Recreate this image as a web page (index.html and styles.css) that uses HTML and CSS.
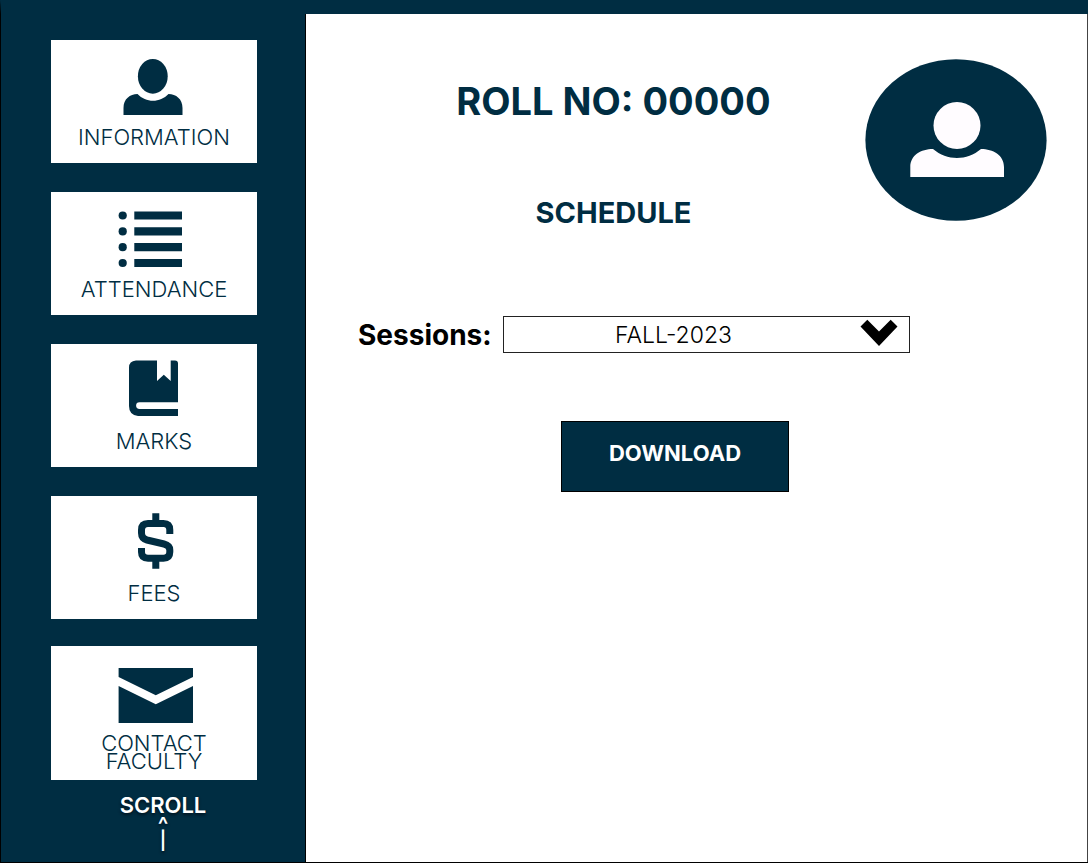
FILE: index.html
```html
<!DOCTYPE html>
<html lang="en">
<head>
<meta charset="utf-8">
<meta name="viewport" content="width=device-width, initial-scale=1">
<title>Schedule</title>
<link rel="stylesheet" href="styles.css">
</head>
<body>
<div class="app">
  <aside class="sidebar">
    <nav class="menu">
      <a class="card" href="#information">
        <svg class="card-icon" viewBox="0 0 80 62" aria-hidden="true"><ellipse cx="38.8" cy="20.3" rx="14.9" ry="17.4"/><path d="M9.5 59V52C9.5 43 16 38 23.5 38C32 47 46 47 54.5 38C62 38 68.5 43 68.5 52V59Z"/></svg>
        <span class="card-label">INFORMATION</span>
      </a>
      <a class="card" href="#attendance">
        <svg class="card-icon" viewBox="0 0 80 62" aria-hidden="true"><circle cx="8.7" cy="7.5" r="4.1"/><circle cx="8.7" cy="23.4" r="4.1"/><circle cx="8.7" cy="39.2" r="4.1"/><circle cx="8.7" cy="55" r="4.1"/><path d="M20.3 3.4H68V11.6H20.3ZM20.3 19.3H68V27.5H20.3ZM20.3 35.1H68V43.3H20.3ZM20.3 50.9H68V59.1H20.3Z"/></svg>
        <span class="card-label">ATTENDANCE</span>
      </a>
      <a class="card" href="#marks">
        <svg class="card-icon" viewBox="0 0 80 62" aria-hidden="true"><path d="M22 0.5H43V21L49.8 14.7L56.7 21V0.5H61Q64 0.5 64 3.5V42.2H25.5A3.4 3.4 0 0 0 25.5 49H64V56H24Q15 55 15 46V7.5Q15 1 22 0.5Z"/></svg>
        <span class="card-label">MARKS</span>
      </a>
      <a class="card" href="#fees">
        <svg class="card-icon" viewBox="0 0 80 62" aria-hidden="true"><path d="M38.3 1.3H45.3V10H38.3ZM38.3 47H45.3V56.8H38.3Z"/><path class="stroke" d="M55.8 21.9V18Q55.8 11.5 49.5 11.5H34Q27.5 11.5 27.5 18V21Q27.5 26.5 33 28L50 32Q55.8 33.5 55.8 38V40Q55.8 46.2 49.5 46.2H34Q27.5 46.2 27.5 40V36"/></svg>
        <span class="card-label">FEES</span>
      </a>
      <a class="card" href="#contact">
        <svg class="card-icon" viewBox="0 0 80 62" aria-hidden="true"><path d="M4.6 6H79V15L41.8 33.3L4.6 15ZM4.6 24L41.8 42.3L79 24V61H4.6Z"/></svg>
        <span class="card-label">CONTACT<br>FACULTY</span>
      </a>
    </nav>
    <div class="scroll">
      <span>SCROLL</span>
      <span class="scroll-head">^</span>
      <span class="scroll-stem">|</span>
    </div>
  </aside>
  <main class="content">
    <header class="head">
      <div class="titles">
        <h1 class="roll">ROLL NO: 00000</h1>
        <h2 class="subtitle">SCHEDULE</h2>
      </div>
      <svg class="avatar" viewBox="0 0 182 162" role="img" aria-label="Profile"><ellipse class="avatar-bg" cx="91" cy="81" rx="90.6" ry="80.8"/><circle cx="92" cy="66.5" r="23.5"/><path d="M45.3 118V108C45.3 96 56 90 68 90C82 102 102 102 116 90C128 90 139 96 139 108V118Z"/></svg>
    </header>
    <form class="form">
      <div class="field">
        <label class="field-label" for="session">Sessions:</label>
        <div class="select-wrap">
          <select class="select" id="session"><option>FALL-2023</option></select>
          <svg class="chevron" viewBox="0 0 38 28" aria-hidden="true"><path d="M0.5 7.5L7.3 0.8L19 12.5L30.7 0.8L37.5 7.5L19 27Z"/></svg>
        </div>
      </div>
      <button class="download" type="button">DOWNLOAD</button>
    </form>
  </main>
</div>
</body>
</html>
```
FILE: styles.css
```css
* {
  box-sizing: border-box;
}

body {
  margin: 0;
  font-family: Inter, "Liberation Sans", sans-serif;
  color: #002d42;
  background: #fff;
}

.app {
  display: grid;
  grid-template-columns: 305px 1fr;
  min-height: calc(100vh - 1px);
  border-top: 14px solid #002d42;
  border-left: 1px solid #000;
  border-bottom: 1px solid #000;
}

.sidebar {
  padding: 26px 48px 0 50px;
  background: #002d42;
  border-right: 1px solid #000;
}

.menu {
  display: flex;
  flex-direction: column;
  gap: 29px;
}

.card {
  display: flex;
  flex-direction: column;
  align-items: center;
  gap: 10px;
  min-height: 123px;
  padding: 16px 0 10px;
  background: #fff;
  color: inherit;
  text-decoration: none;
}

.card:last-child {
  margin-top: -2px;
}

.card-icon {
  width: 80px;
  height: 62px;
  fill: #002d42;
}

.stroke {
  fill: none;
  stroke: #002d42;
  stroke-width: 7;
}

.card-label {
  font-size: 22px;
  font-weight: 300;
  line-height: 18px;
  text-align: center;
}

.scroll {
  display: flex;
  flex-direction: column;
  align-items: center;
  padding: 14px 0 0 18px;
  color: #fff;
  font-size: 22px;
  font-weight: 600;
  line-height: 22px;
  text-shadow: 0 2px 3px #001420;
}

.scroll-head {
  line-height: 18px;
}

.scroll-stem {
  font-size: 18px;
  line-height: 14px;
}

.content {
  border-right: 1px solid #444;
}

.head {
  display: flex;
  align-items: flex-start;
  padding: 45px 40px 0 56px;
}

.titles {
  flex: 1;
  padding-top: 18px;
  text-align: center;
}

.roll,
.subtitle {
  margin: 0;
  font-weight: 700;
}

.roll {
  font-size: 38px;
  line-height: 48px;
}

.subtitle {
  padding-top: 70px;
  font-size: 29px;
  line-height: 36px;
}

.avatar {
  width: 182px;
  height: 162px;
  fill: #fffcff;
}

.avatar-bg {
  fill: #002d42;
}

.form {
  display: flex;
  flex-direction: column;
  align-items: center;
  padding: 85px 177px 0 52px;
}

.field {
  display: flex;
  align-items: center;
  width: 100%;
  color: #000;
}

.field-label {
  min-width: 145px;
  font-size: 28px;
  font-weight: 700;
}

.select-wrap {
  position: relative;
  flex: 1;
}

.select {
  display: block;
  width: 100%;
  height: 37px;
  padding: 0 66px 0 0;
  border: 1px solid #222;
  border-radius: 0;
  appearance: none;
  background: #fff;
  color: #000;
  font-family: inherit;
  font-size: 23px;
  font-weight: 300;
  text-align: center;
  text-align-last: center;
}

.chevron {
  position: absolute;
  top: 3px;
  right: 12px;
  width: 38px;
  height: 28px;
  pointer-events: none;
}

.download {
  margin: 68px 0 0 82px;
  padding: 20px 47px 26px;
  border: 1px solid #000;
  background: #002d42;
  color: #fff;
  font-family: inherit;
  font-size: 22px;
  font-weight: 700;
  line-height: 23px;
}
```
